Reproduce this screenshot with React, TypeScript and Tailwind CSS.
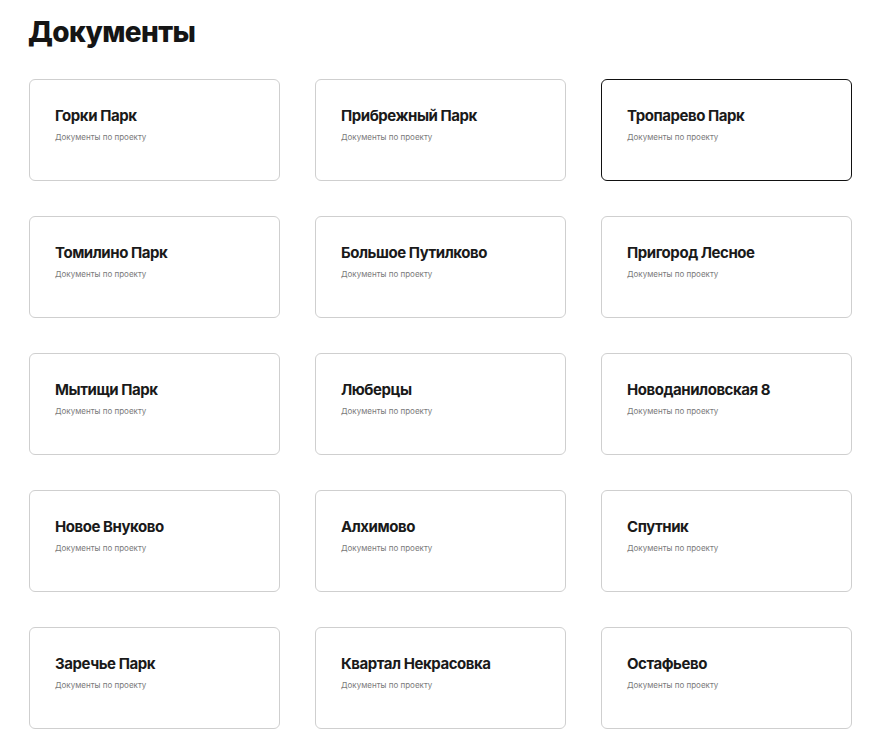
const projects = [
  'Горки Парк',
  'Прибрежный Парк',
  'Тропарево Парк',
  'Томилино Парк',
  'Большое Путилково',
  'Пригород Лесное',
  'Мытищи Парк',
  'Люберцы',
  'Новоданиловская 8',
  'Новое Внуково',
  'Алхимово',
  'Спутник',
  'Заречье Парк',
  'Квартал Некрасовка',
  'Остафьево',
]

// карточка проекта
const ProjectCard = ({ name, active }: { name: string; active?: boolean }) => {
  return (
    <div
      className={
        active
          ? 'h-[102px] rounded-[6px] border border-[#111] bg-white px-[25px] pt-[26px]'
          : 'h-[102px] rounded-[6px] border border-[#cfcfcf] bg-white px-[25px] pt-[26px]'
      }
    >
      <h3 className="text-[15px] leading-[20px] font-bold text-[#1a1a1a] tracking-[-0.45px]">{name}</h3>
      <p className="mt-[6px] text-[8px] leading-[11px] text-[#7a7a7a]">Документы по проекту</p>
    </div>
  )
}

export default function App() {
  return (
    <div
      className="min-h-[748px] bg-white px-[29px] pt-[15px]"
      style={{ fontFamily: 'Inter, "Noto Sans", sans-serif' }}
    >
      <h1 className="text-[28px] leading-[34px] font-extrabold text-[#151515] tracking-[-0.6px] -ml-[1px]">Документы</h1>
      <div className="mt-[30px] grid grid-cols-[251px_251px_251px] gap-[35px]">
        {projects.map((p, i) => (
          <ProjectCard key={p} name={p} active={i === 2} />
        ))}
      </div>
    </div>
  )
}
